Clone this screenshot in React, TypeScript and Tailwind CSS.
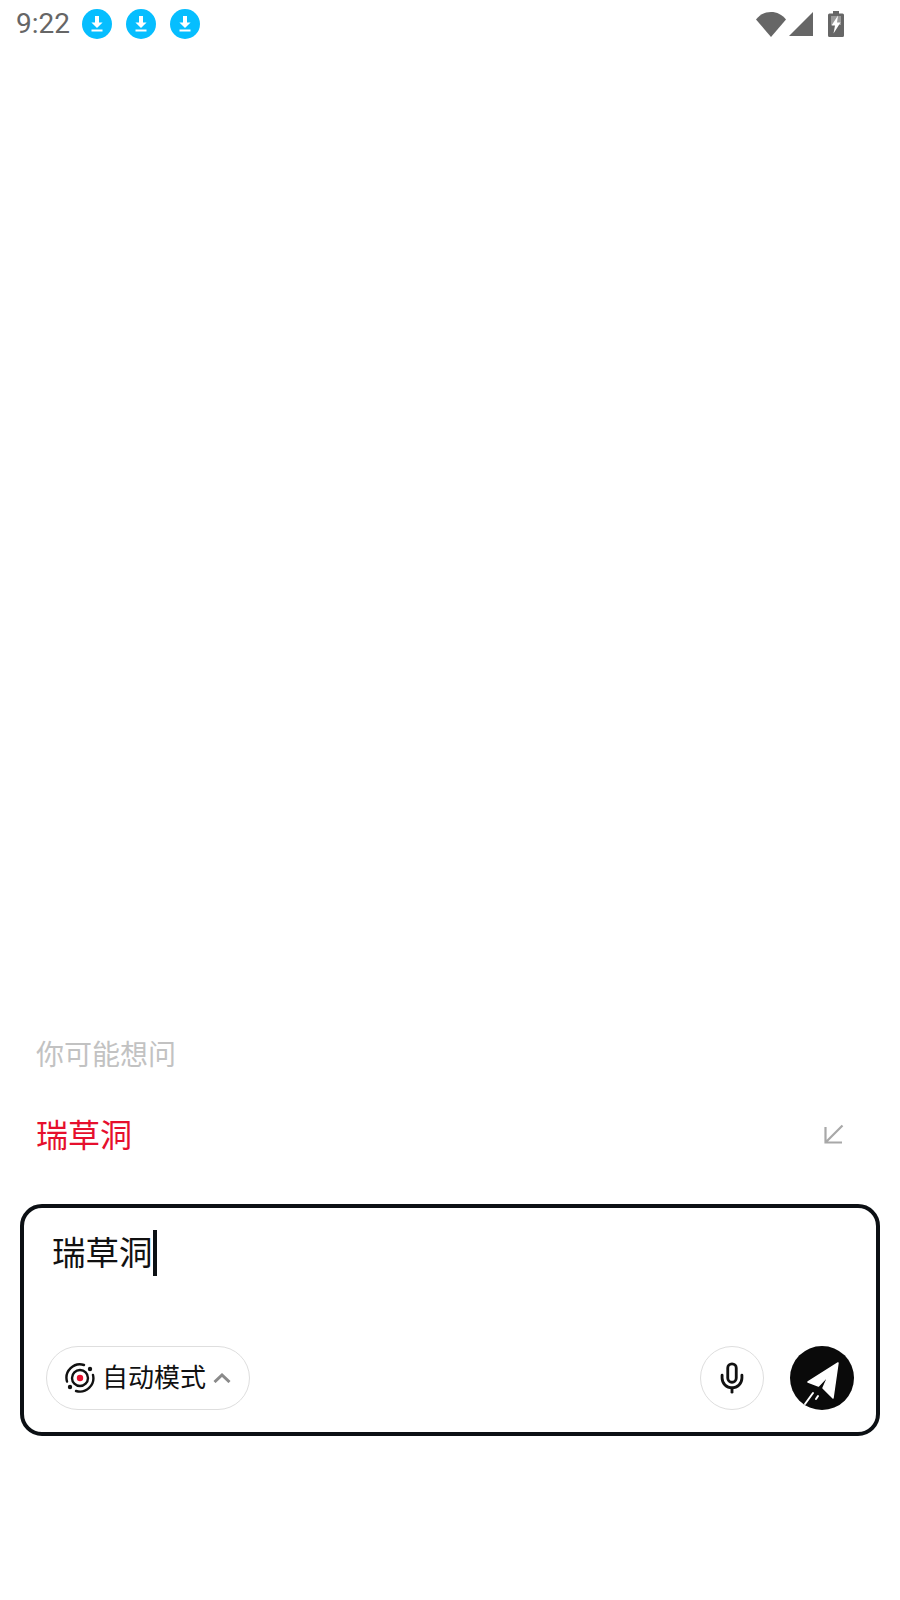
import { Mic } from 'lucide-react';

const cjk = "font-['Noto_Sans_CJK_SC','Noto_Sans',sans-serif]";

// Circular "download in progress" badge shown in the status bar
const DownloadBadge = () => (
  <svg width="30" height="30" viewBox="0 0 30 30">
    <circle cx="15" cy="15" r="15" fill="#06beff" />
    <path d="M13 7h4v6.500h3.600L15 19l-5.600-5.500H13z" fill="#fff" />
    <rect x="9.500" y="20.500" width="11" height="2" fill="#fff" />
  </svg>
);

const StatusBar = () => (
  <div className="flex items-center h-[48px] shrink-0 pl-[16px] pr-[56px]">
    <span className="font-['Roboto',sans-serif] font-[450] text-[28px] leading-[48px] text-[#666666] w-[66px]">9:22</span>
    <div className="flex items-center gap-[14px]">
      <DownloadBadge />
      <DownloadBadge />
      <DownloadBadge />
    </div>
    <div className="ml-auto flex items-center">
      <svg width="30" height="26" viewBox="0 0 30 26">
        <path d="M0 8.500C4 3.500 9 1 15 1s11 2.500 15 7.500L15 26z" fill="#666666" />
      </svg>
      <svg width="24" height="24" viewBox="0 0 24 24" className="ml-[3px]">
        <path d="M24 0v24H0z" fill="#666666" />
      </svg>
      <svg width="16" height="26" viewBox="0 0 16 26" className="ml-[15px]">
        <path d="M5 0h6v2.500h3.500A1.500 1.500 0 0 1 16 4v20.500a1.500 1.500 0 0 1-1.500 1.500h-13A1.500 1.500 0 0 1 0 24.500V4a1.500 1.500 0 0 1 1.500-1.500H5z" fill="#666666" />
        <path d="M3 5h10v9H3z" fill="#9a9a9a" />
        <path d="M10 4.500 3.500 14.500h3.500l-1.500 8L12.500 11.500H9z" fill="#fff" />
      </svg>
    </div>
  </div>
);

// Orbit-style mark for the mode selector
const ModeIcon = () => (
  <svg width="30" height="30" viewBox="0 0 30 30" fill="none">
    <circle cx="15" cy="15" r="3.200" fill="#e60f2d" />
    <circle cx="15" cy="15" r="8" stroke="#111" strokeWidth="2.400" />
    <path d="M2 18.500A13.500 13.500 0 0 1 19 2" stroke="#111" strokeWidth="2.400" strokeLinecap="round" />
    <path d="M28 12A13.500 13.500 0 0 1 11 28" stroke="#111" strokeWidth="2.400" strokeLinecap="round" />
    <circle cx="25" cy="6" r="2.200" fill="#111" />
    <circle cx="5" cy="24" r="2.200" fill="#111" />
  </svg>
);

const SendIcon = () => (
  <svg width="64" height="64" viewBox="0 0 64 64">
    <circle cx="32" cy="32" r="32" fill="#0a0a0a" />
    <path d="M48 17 18 36l10.500 4 10-10.500-5.500 12.500 10 10z" fill="#fff" stroke="#fff" strokeWidth="1.500" strokeLinejoin="round" />
    <path d="M23 47 15 58M28 50l-2 3" stroke="#fff" strokeWidth="2" strokeLinecap="round" fill="none" />
  </svg>
);

export default function App() {
  return (
    <div className={`flex flex-col h-[1600px] w-[900px] bg-white ${cjk}`}>
      <StatusBar />
      <div className="flex-1" />

      {/* Suggestions */}
      <div className="pl-[36px] text-[28px] leading-[40px] text-[#c2c2c2]">你可能想问</div>
      <div className="flex items-center justify-between mt-[40px] pl-[36px] pr-[56px]">
        <span className="text-[32px] leading-[44px] -translate-y-[2px] text-[#e60f2d]">瑞草洞</span>
        <svg width="20" height="20" viewBox="0 0 20 20" fill="none" stroke="#a8a8a8" strokeWidth="2.200" className="-translate-y-px">
          <path d="M18.500 1.500 2 18M1.500 3v15.500H18" />
        </svg>
      </div>

      {/* Input box */}
      <div className="mt-[47px] mx-[20px] mb-[164px] h-[232px] rounded-[22px] border-[4px] border-[#0c1014] px-[22px] pt-[22px] pb-[22px] flex flex-col justify-between">
        <div className="flex items-center h-[46px] pl-[6px]">
          <span className="text-[33.500px] leading-[46px] -translate-y-[2px] text-[#111111]">瑞草洞</span>
          <span className="w-[4px] h-[46px] bg-[#0c1014]" />
        </div>
        <div className="flex items-center">
          <button className="flex items-center h-[64px] w-[204px] rounded-full border border-[#dedede] pl-[18px]">
            <ModeIcon />
            <span className="ml-[7px] text-[26px] leading-[36px] -translate-y-[2px] text-[#111111]">自动模式</span>
            <svg width="18" height="10" viewBox="0 0 18 10" fill="none" stroke="#8a8a8a" strokeWidth="3" className="ml-[7px]">
              <path d="M1.500 9 9 2l7.500 7" />
            </svg>
          </button>
          <div className="ml-auto flex items-center justify-center w-[64px] h-[64px] rounded-full border border-[#dedede]">
            <Mic size={34} strokeWidth={2} color="#111111" />
          </div>
          <div className="ml-[26px]">
            <SendIcon />
          </div>
        </div>
      </div>
    </div>
  );
}
